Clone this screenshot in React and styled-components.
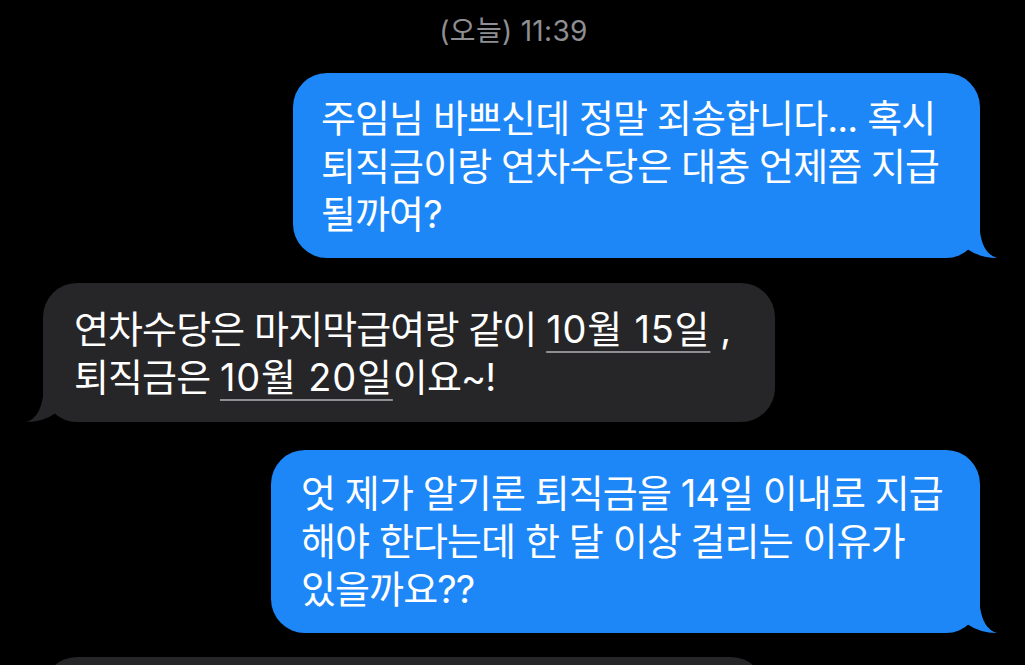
import React from "react";
import styled, { createGlobalStyle } from "styled-components";

const BLUE = "#1e87f8";
const GRAY = "#262628";

const GlobalStyle = createGlobalStyle`
  html, body {
    margin: 0;
    padding: 0;
    background: #000;
    height: 665px;
    overflow: hidden;
  }
`;

const Screen = styled.div`
  width: 1025px;
  height: 665px;
  background: #000;
  display: flex;
  flex-direction: column;
  padding-top: 15px;
  box-sizing: border-box;
  font-family: Inter, "Noto Sans CJK KR", sans-serif;
  overflow: hidden;
`;

const Stamp = styled.div`
  text-align: center;
  color: #8e8e93;
  font-size: 28px;
  line-height: 32px;
  letter-spacing: 0.3px;
  margin-bottom: 26px;
  padding-left: 2px;
`;

const Row = styled.div`
  display: flex;
  justify-content: ${({ $sent }) => ($sent ? "flex-end" : "flex-start")};
  padding: ${({ $sent }) => ($sent ? "0 45px 0 0" : "0 0 0 43px")};
  margin-bottom: ${({ $gap }) => $gap || 0}px;
  flex-shrink: 0;
`;

const Bubble = styled.div`
  position: relative;
  box-sizing: border-box;
  width: ${({ $w }) => $w}px;
  min-height: ${({ $h }) => $h || 0}px;
  padding: ${({ $pad }) => $pad};
  background: ${({ $sent }) => ($sent ? BLUE : GRAY)};
  border-radius: 34px;
  color: #fff;
  font-size: 38px;
  line-height: 48px;
  letter-spacing: -0.9px;
  white-space: nowrap;
`;

const Tail = styled.svg`
  position: absolute;
  bottom: 0;
  width: 40px;
  height: 40px;
  ${({ $sent }) =>
    $sent ? "right: -18px;" : "left: -18px; transform: scaleX(-1);"}
`;

const Mark = styled.span`
  letter-spacing: 0.8px;
  text-decoration: underline;
  text-decoration-color: #8e8e93;
  text-decoration-thickness: 2px;
  text-underline-offset: 8px;
`;

const BubbleTail = ({ sent }) => (
  <Tail $sent={sent} viewBox="0 0 40 40">
    <path
      d="M9 0 L22 0 L22 14 Q25 36 39 40 Q22 40 9 31 Z"
      fill={sent ? BLUE : GRAY}
    />
  </Tail>
);

export default function App() {
  return (
    <>
      <GlobalStyle />
      <Screen>
        <Stamp>(오늘) 11:39</Stamp>

        <Row $sent $gap={25}>
          <Bubble $sent $w={687} $pad="21px 20px 20px 28px">
            주임님 바쁘신데 정말 죄송합니다... 혹시
            <br />
            퇴직금이랑 연차수당은 대충 언제쯤 지급
            <br />
            될까여?
            <BubbleTail sent />
          </Bubble>
        </Row>

        <Row $gap={28}>
          <Bubble $w={732} $pad="22px 20px 21px 31px">
            연차수당은 마지막급여랑 같이 <Mark>10월 15일</Mark> ,
            <br />
            퇴직금은 <Mark>10월 20일</Mark>이요~!
            <BubbleTail />
          </Bubble>
        </Row>

        <Row $sent $gap={24}>
          <Bubble $sent $w={709} $pad="19px 20px 20px 30px">
            엇 제가 알기론 퇴직금을 14일 이내로 지급
            <br />
            해야 한다는데 한 달 이상 걸리는 이유가
            <br />
            있을까요??
            <BubbleTail sent />
          </Bubble>
        </Row>

        <Row>
          <Bubble $w={722} $h={120} $pad="20px 20px 20px 32px" />
        </Row>
      </Screen>
    </>
  );
}
